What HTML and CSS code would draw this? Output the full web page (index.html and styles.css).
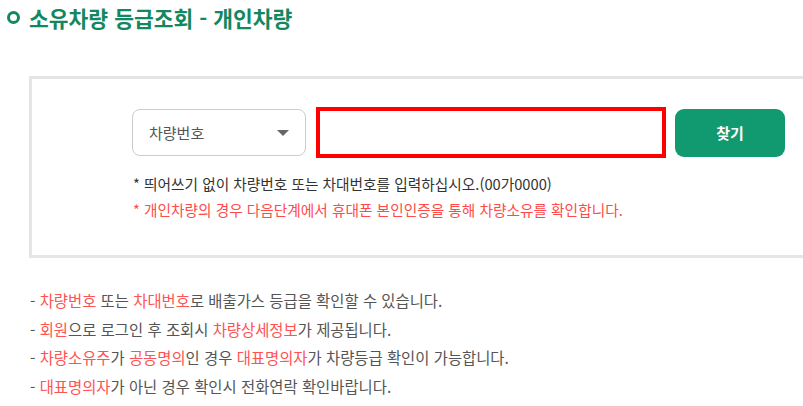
FILE: index.html
```html
<!DOCTYPE html>
<html lang="ko">
<head>
	<meta charset="UTF-8">
	<title>소유차량 등급조회 - 개인차량</title>
	<link rel="stylesheet" href="styles.css">
</head>
<body>
<h2 class="page-title"><span class="title-dot"></span>소유차량 등급조회 - 개인차량</h2>

<div class="search-box">
	<div class="search-row">
		<div class="search-select">
			<span>차량번호</span>
			<span class="select-arrow"></span>
		</div>
		<input class="search-input" type="text">
		<button class="search-btn">찾기</button>
	</div>
	<p class="hint">* 띄어쓰기 없이 차량번호 또는 차대번호를 입력하십시오.(00가0000)</p>
	<p class="hint warn">* 개인차량의 경우 다음단계에서 휴대폰 본인인증을 통해 차량소유를 확인합니다.</p>
</div>

<ul class="notice">
	<li>- <em>차량번호</em> 또는 <em>차대번호</em>로 배출가스 등급을 확인할 수 있습니다.</li>
	<li>- <em>회원</em>으로 로그인 후 조회시 <em>차량상세정보</em>가 제공됩니다.</li>
	<li>- <em>차량소유주</em>가 <em>공동명의</em>인 경우 <em>대표명의자</em>가 차량등급 확인이 가능합니다.</li>
	<li>- <em>대표명의자</em>가 아닌 경우 확인시 전화연락 확인바랍니다.</li>
</ul>
</body>
</html>
```
FILE: styles.css
```css
*{
	font-family: "Noto Sans CJK KR", "Noto Sans", sans-serif;
	box-sizing: border-box;
}
html, body{
	overflow: hidden;
}
body{
	margin: 0;
	background: #fff;
}
.page-title{
	display: flex;
	align-items: center;
	margin: 0;
	padding: 2px 0 0 7px;
	height: 32px;
	font-size: 21.5px;
	font-weight: bold;
	color: #13875e;
}
.title-dot{
	width: 13px;
	height: 13px;
	border: 3.5px solid #13875e;
	border-radius: 50%;
	margin-right: 9px;
}
.search-box{
	margin: 44px 0 0 29px;
	width: 800px;
	border: 3px solid #e5e5e5;
	padding: 28px 0 32px 100px;
}
.search-row{
	display: flex;
	align-items: center;
	margin-bottom: 13px;
}
.search-select{
	display: flex;
	align-items: center;
	justify-content: space-between;
	width: 174px;
	height: 47px;
	border: 1px solid #ccc;
	border-radius: 8px;
	padding: 0 16px 0 16px;
	font-size: 15px;
	color: #555;
}
.select-arrow{
	width: 0;
	height: 0;
	border-left: 6px solid transparent;
	border-right: 6px solid transparent;
	border-top: 6px solid #666;
}
.search-input{
	width: 350px;
	height: 51px;
	margin-left: 10px;
	border: 4px solid #f00;
	outline: none;
}
.search-btn{
	width: 110px;
	height: 48px;
	margin-left: 9px;
	border: none;
	border-radius: 9px;
	background: #11996f;
	color: #fff;
	font-size: 15px;
	font-weight: bold;
}
.hint{
	margin: 0;
	padding-left: 1px;
	font-size: 14.7px;
	line-height: 26px;
	color: #333;
}
.hint.warn{
	color: #ff4a4a;
}
.notice{
	list-style: none;
	margin: 28px 0 0;
	padding: 0 0 0 30px;
}
.notice li{
	font-size: 15.4px;
	line-height: 28.5px;
	color: #555;
}
.notice em{
	font-style: normal;
	color: #ff5252;
}
```
